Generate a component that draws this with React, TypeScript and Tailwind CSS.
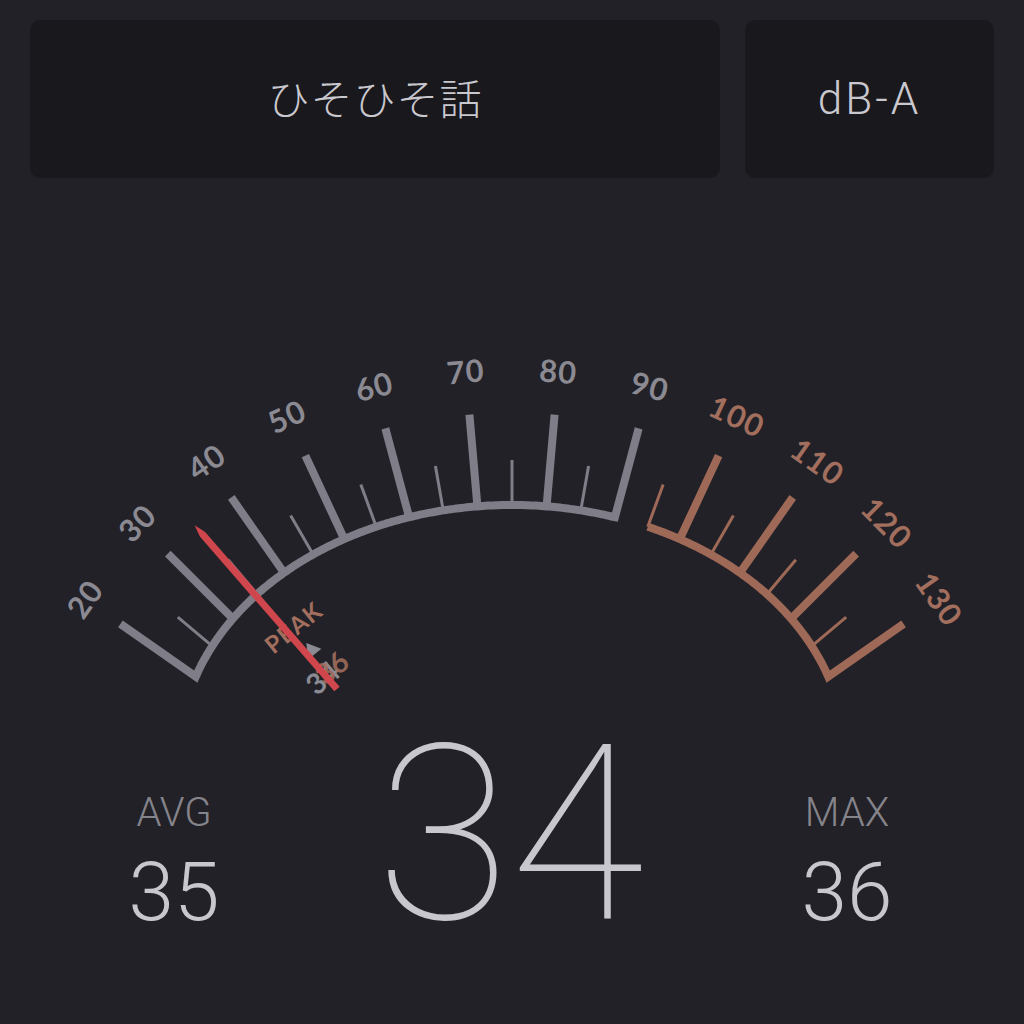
import React from "react";

// ellipse the scale sits on
const CX = 512;
const CY = 755;
const RA = 333;
const RB = 250;
const STEP = 6.9; // px of arc per dB

type Pt = { x: number; y: number; s: number };

const buildArc = (): Pt[] => {
  const list: Pt[] = [];
  let s = 0;
  let prev: { x: number; y: number } | null = null;
  for (let i = -800; i <= 800; i++) {
    const f = i * 0.002;
    const x = CX + RA * Math.sin(f);
    const y = CY - RB * Math.cos(f);
    if (prev) s += Math.hypot(x - prev.x, y - prev.y);
    list.push({ x, y, s });
    prev = { x, y };
  }
  const mid = list[800].s;
  return list.map((p) => ({ ...p, s: p.s - mid }));
};

const ARC = buildArc();

const pointAt = (v: number) => {
  const s = (v - 75) * STEP;
  let best = ARC[0];
  for (const p of ARC) {
    if (Math.abs(p.s - s) < Math.abs(best.s - s)) best = p;
  }
  return best;
};

const dirOf = (v: number) => {
  const t = ((v - 75) * Math.PI) / 180;
  return { dx: Math.sin(t), dy: -Math.cos(t) };
};

const arcPath = (from: number, to: number) => {
  const a = pointAt(from).s;
  const b = pointAt(to).s;
  return ARC.filter((p, i) => p.s >= a && p.s <= b && (i % 4 === 0 || p.s === a || p.s === b))
    .map((p) => `${p.x.toFixed(1)},${p.y.toFixed(1)}`)
    .join(" L");
};

const GRAY = "#7f7e88";
const BROWN = "#9f6957";
const LABEL_GRAY = "#8b8a93";
const LABEL_BROWN = "#a26e5d";
const LONG = 92;
const SHORT = 45;

const tip = (v: number, len: number) => {
  const p = pointAt(v);
  const d = dirOf(v);
  return { x: p.x + d.dx * len, y: p.y + d.dy * len };
};

const labelFont = "Lato, 'Noto Sans', sans-serif";

const Gauge = () => {
  const majors = [20, 30, 40, 50, 60, 70, 80, 90, 100, 110, 120, 130];
  const minors = [25, 35, 45, 55, 65, 75, 85, 95, 105, 115, 125];

  const t20 = tip(20, LONG);
  const t90 = tip(90, LONG);
  const t130 = tip(130, LONG);

  const grayPath = `M${t20.x},${t20.y} L${arcPath(20, 90)} L${t90.x},${t90.y}`;
  const brownPath = `M${arcPath(95, 130)} L${t130.x},${t130.y}`;

  // needle at 34
  const nd = dirOf(34);
  const tail = { x: 337, y: 689 };
  const nlen = 217;
  const nTip = { x: tail.x + nd.dx * nlen, y: tail.y + nd.dy * nlen };
  const px = -nd.dy * 3.5;
  const py = nd.dx * 3.5;
  const sh = { x: tail.x + nd.dx * (nlen - 12), y: tail.y + nd.dy * (nlen - 12) };
  const needle = `M${tail.x + px},${tail.y + py} L${sh.x + px},${sh.y + py} L${nTip.x},${nTip.y} L${sh.x - px},${sh.y - py} L${tail.x - px},${tail.y - py} Z`;

  return (
    <svg width={1024} height={510} viewBox="0 200 1024 510" className="block">
      <path d={grayPath} fill="none" stroke={GRAY} strokeWidth={8} strokeLinejoin="miter" strokeMiterlimit={10} />
      <path d={brownPath} fill="none" stroke={BROWN} strokeWidth={8} strokeLinejoin="miter" strokeMiterlimit={10} />
      {majors
        .filter((v) => v > 20 && v < 90)
        .map((v) => {
          const b = pointAt(v);
          const t = tip(v, LONG);
          return <line key={v} x1={b.x} y1={b.y} x2={t.x} y2={t.y} stroke={GRAY} strokeWidth={8} />;
        })}
      {[100, 110, 120].map((v) => {
        const b = pointAt(v);
        const t = tip(v, LONG);
        return <line key={v} x1={b.x} y1={b.y} x2={t.x} y2={t.y} stroke={BROWN} strokeWidth={8} />;
      })}
      {minors.map((v) => {
        const b = pointAt(v);
        const t = tip(v, SHORT);
        return (
          <line key={v} x1={b.x} y1={b.y} x2={t.x} y2={t.y} stroke={v > 90 ? BROWN : GRAY} strokeWidth={3} />
        );
      })}
      {majors.map((v) => {
        const t = tip(v, 136);
        return (
          <text
            key={v}
            x={t.x}
            y={t.y}
            transform={`rotate(${v - 75} ${t.x} ${t.y})`}
            textAnchor="middle"
            dominantBaseline="central"
            fontFamily={labelFont}
            fontWeight={700}
            fontSize={31}
            letterSpacing={1}
            fill={v > 90 ? LABEL_BROWN : LABEL_GRAY}
          >
            {v}
          </text>
        );
      })}

      {/* peak marker */}
      <text
        x={293}
        y={627}
        transform="rotate(-39 293 627)"
        textAnchor="middle"
        dominantBaseline="central"
        fontFamily={labelFont}
        fontWeight={700}
        fontSize={24}
        letterSpacing={1}
        fill={LABEL_BROWN}
      >
        PEAK
      </text>
      <polygon points="303,655 312,641 320,655" fill={LABEL_GRAY} transform="rotate(-39 312 650)" />
      <text
        x={322}
        y={677}
        transform="rotate(-41 322 677)"
        textAnchor="middle"
        dominantBaseline="central"
        fontFamily={labelFont}
        fontWeight={700}
        fontSize={29}
        fill={LABEL_GRAY}
      >
        34
      </text>
      <text
        x={331}
        y={667}
        transform="rotate(-39 331 667)"
        textAnchor="middle"
        dominantBaseline="central"
        fontFamily={labelFont}
        fontWeight={700}
        fontSize={29}
        fill={LABEL_BROWN}
        fillOpacity={0.9}
      >
        36
      </text>

      <path d={needle} fill="#d0464d" />
    </svg>
  );
};

export default function App() {
  return (
    <div className="w-[1024px] h-[1024px] bg-[#222127] overflow-hidden" style={{ fontFamily: "Roboto, 'Liberation Sans', sans-serif" }}>
      <div className="flex gap-[25px] px-[30px] pt-[20px] pb-[22px]">
        <div className="w-[690px] h-[158px] rounded-[10px] bg-[#19181d] flex items-center justify-center pb-[6px]">
          <span className="text-[42px] font-light text-[#c9c8ce] tracking-[1px]" style={{ fontFamily: "'Noto Sans CJK JP', sans-serif" }}>
            ひそひそ話
          </span>
        </div>
        <div className="w-[249px] h-[158px] rounded-[10px] bg-[#19181d] flex items-center justify-center">
          <span className="text-[44px] font-light text-[#c9c8ce] tracking-[3px]">dB-A</span>
        </div>
      </div>

      <Gauge />

      <div className="flex">
        <div className="w-[348px] flex flex-col items-center pt-[83px]">
          <span className="text-[40px] leading-none font-light text-[#85848b]">AVG</span>
          <span className="mt-[18px] text-[82px] leading-none font-light text-[#c8c7ce]">35</span>
        </div>
        <div className="w-[324px] flex flex-col items-center pt-[3px]">
          <span className="text-[245px] leading-none font-thin text-[#c8c7ce]">34</span>
        </div>
        <div className="w-[350px] flex flex-col items-center pt-[83px]">
          <span className="text-[40px] leading-none font-light text-[#85848b]">MAX</span>
          <span className="mt-[18px] text-[82px] leading-none font-light text-[#c8c7ce]">36</span>
        </div>
      </div>
    </div>
  );
}
